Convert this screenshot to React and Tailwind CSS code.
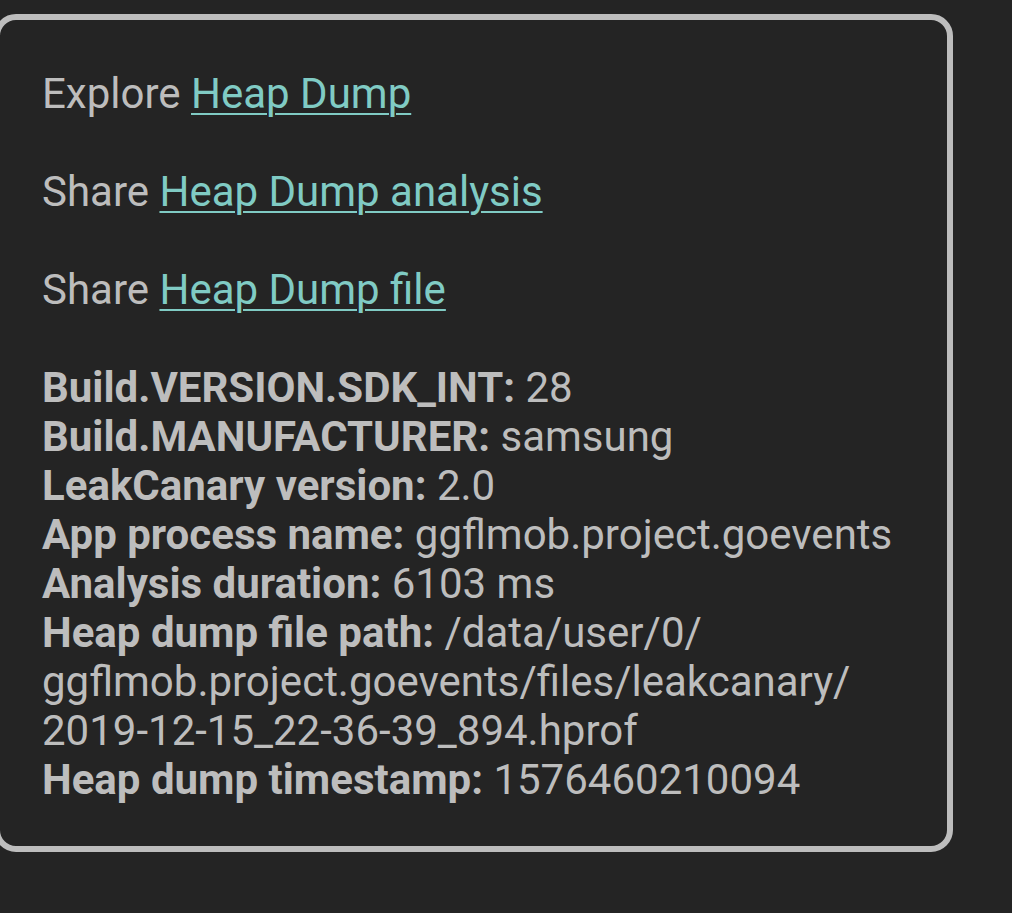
import React from 'react';

const info = [
  ['Build.VERSION.SDK_INT:', ['28']],
  ['Build.MANUFACTURER:', ['samsung']],
  ['LeakCanary version:', ['2.0']],
  ['App process name:', ['ggflmob.project.goevents']],
  ['Analysis duration:', ['6103 ms']],
  ['Heap dump file path:', ['/data/user/0/', 'ggflmob.project.goevents/files/leakcanary/', '2019-12-15_22-36-39_894.hprof']],
  ['Heap dump timestamp:', ['1576460210094']],
];

const Link = ({ children }) => (
  <a href="#" className="text-[#80cbc4] underline decoration-2 underline-offset-[5px]">
    {children}
  </a>
);

export default function App() {
  return (
    <div
      className="w-full h-[913px] bg-[#242424] pt-[14px] overflow-hidden"
      style={{ fontFamily: 'Roboto, "Noto Sans", sans-serif' }}
    >
      <div className="ml-[-6px] w-[959px] h-[838px] border-[6px] border-[#bdbdbd] rounded-[22px] pl-[42px] pr-[10px] pt-[49px] text-[42px] leading-[49px] text-[#bdbdbd]">
        <p>
          Explore <Link>Heap Dump</Link>
        </p>
        <p className="mt-[49px]">
          Share <Link>Heap Dump analysis</Link>
        </p>
        <p className="mt-[49px]">
          Share <Link>Heap Dump file</Link>
        </p>
        <div className="mt-[49px]">
          {info.map(([k, v]) => (
            <p key={k} className="whitespace-nowrap">
              <span className="font-bold">{k}</span>{' '}
              {v.map((line, i) => (
                <React.Fragment key={i}>
                  {i > 0 && <br />}
                  {line}
                </React.Fragment>
              ))}
            </p>
          ))}
        </div>
      </div>
    </div>
  );
}
